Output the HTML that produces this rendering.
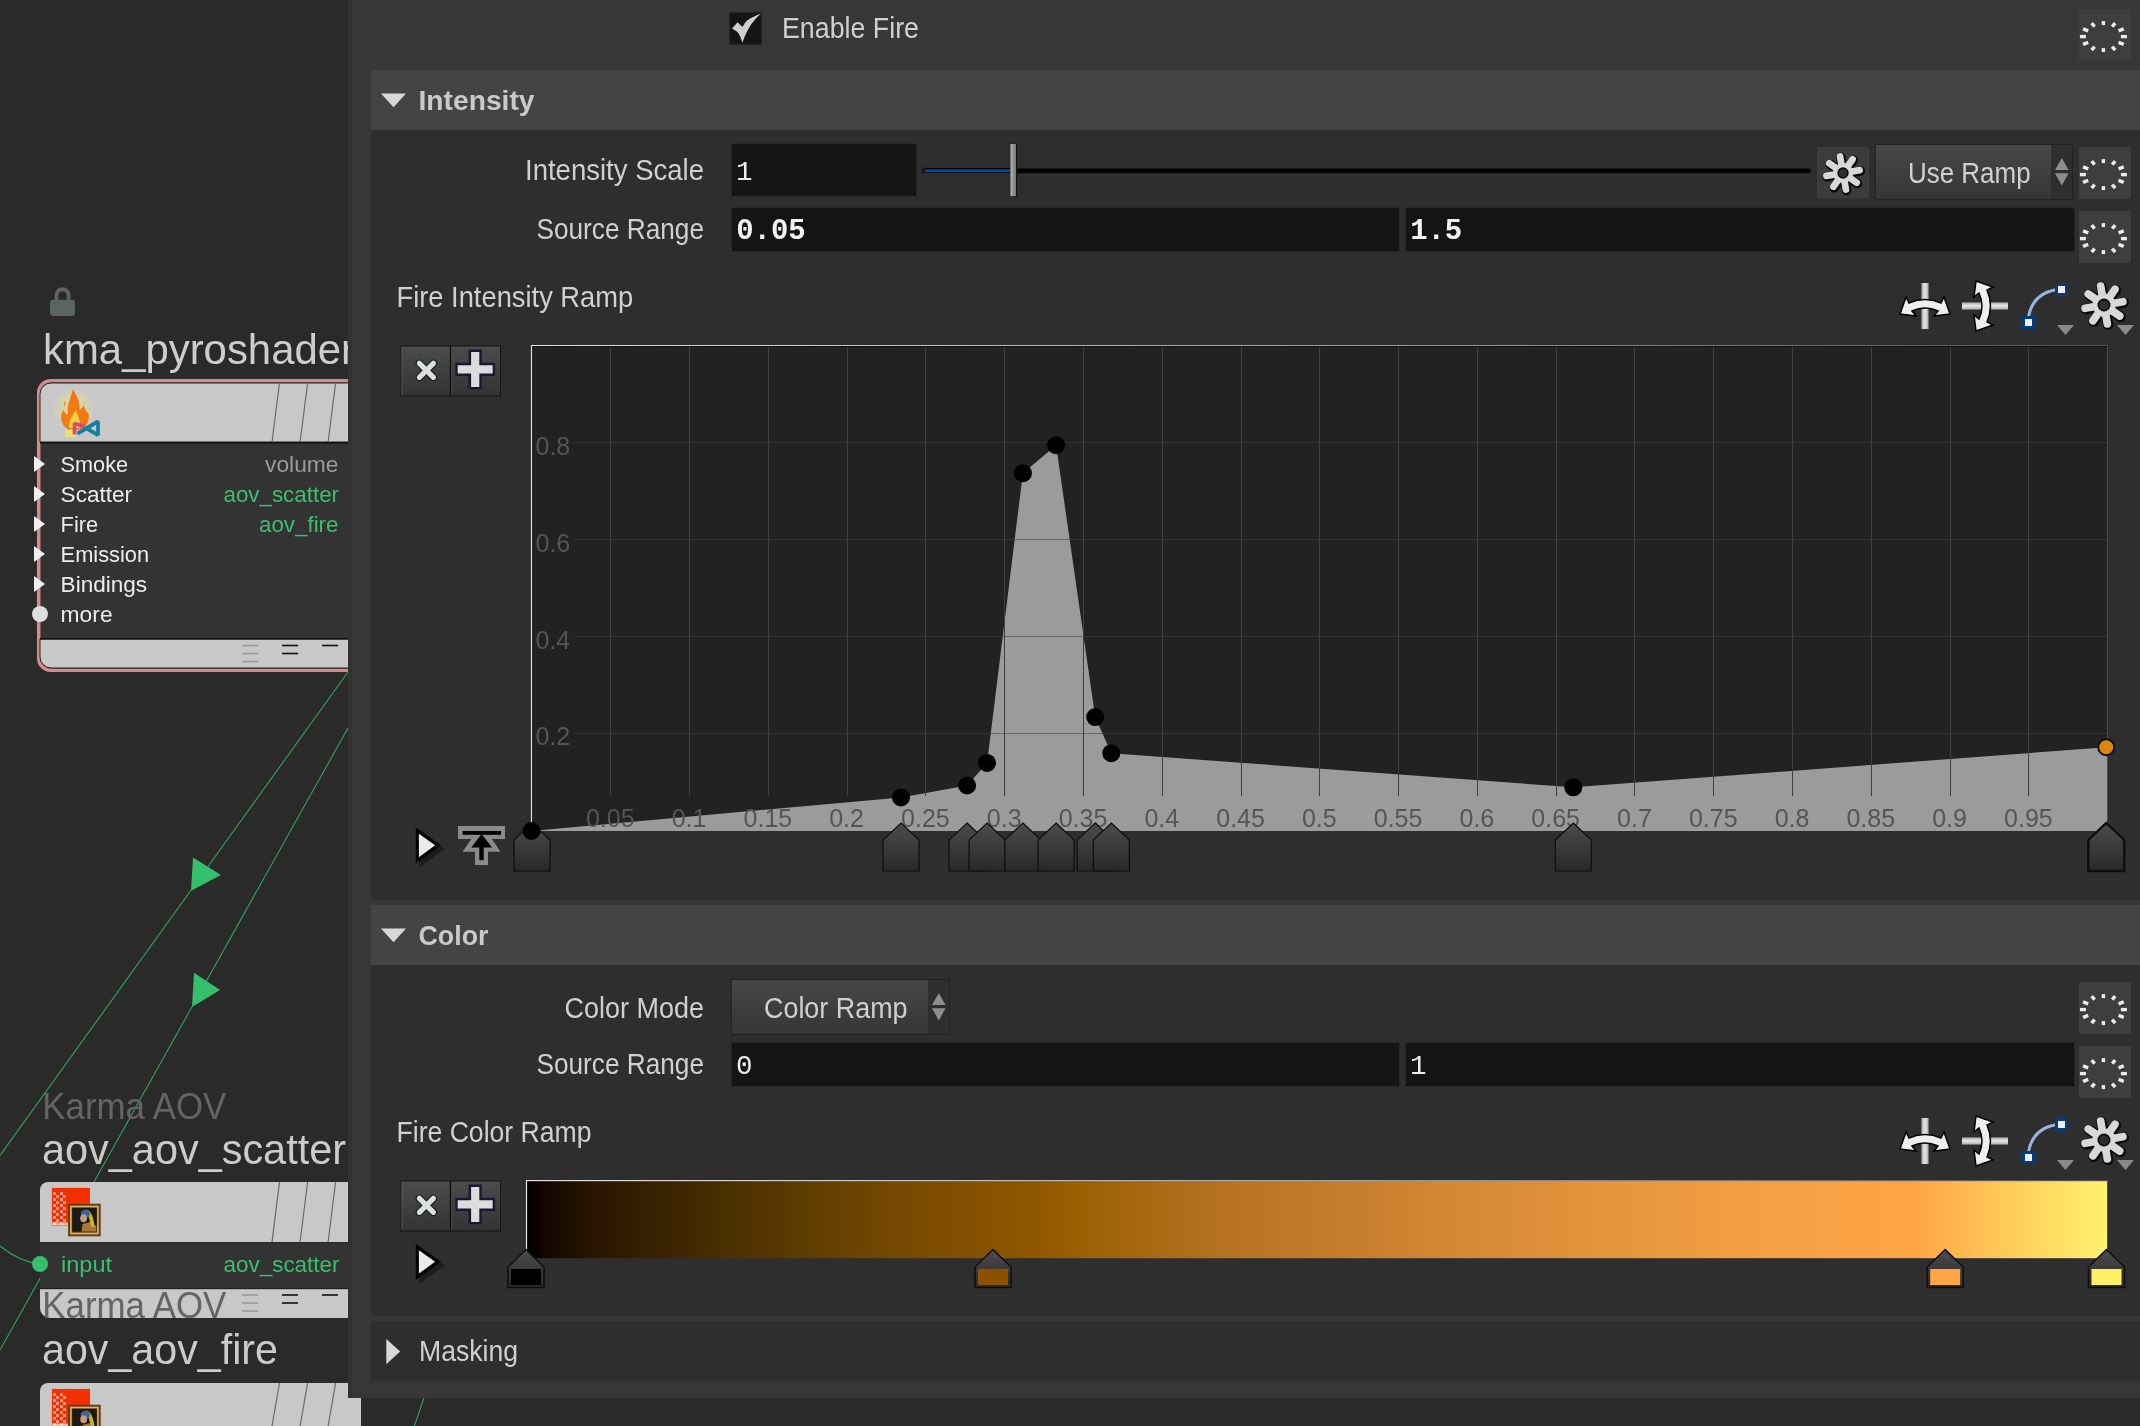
<!DOCTYPE html>
<html><head><meta charset="utf-8"><style>
html,body{margin:0;padding:0;background:#2a2a2a;overflow:hidden;}
svg{display:block;will-change:transform;}
</style></head><body>
<svg width="2140" height="1426" viewBox="0 0 2140 1426">
<defs><filter id="gshadow" x="-30%" y="-30%" width="160%" height="160%"><feDropShadow dx="1" dy="1.5" stdDeviation="1" flood-color="#000" flood-opacity="0.9"/></filter></defs>
<rect x="0" y="0" width="2140" height="1426" fill="#2a2a2a" />
<g stroke="#2eaa5e" stroke-width="1.05" fill="none">
<line x1="348" y1="672" x2="0" y2="1155.5"/>
<line x1="348" y1="728" x2="0" y2="1350"/>
<path d="M0,1246 Q20,1262 40,1264"/>
<line x1="426" y1="1392" x2="413" y2="1430"/>
</g>
<polygon points="193,857.6 221,875 191,890.7" fill="#33bf6b"/>
<polygon points="194,972.7 220,990 192,1007" fill="#33bf6b"/>
<g fill="#5a6560">
<path d="M54.6,301 V295.2 A8,8 0 0 1 70.6,295.2 V301 H66.6 V295.5 A4.1,4.1 0 0 0 58.4,295.5 V301 Z"/>
<rect x="50.1" y="299.8" width="24.8" height="16.1" rx="3"/>
</g>
<text x="43" y="364" font-family="Liberation Sans" font-size="43" fill="#cdcdcd" font-weight="normal" text-anchor="start" textLength="312" lengthAdjust="spacingAndGlyphs" >kma_pyroshader</text>
<rect x="38.7" y="380.8" width="330" height="289.4" rx="12" fill="#333333" stroke="#d28b8f" stroke-width="3.5"/>
<path d="M40,442 V394 A11,11 0 0 1 51,383 H360 V442 Z" fill="#c8c8c8" stroke="#222" stroke-width="1"/>
<rect x="40" y="442" width="320" height="1.5" fill="#111" />
<path d="M40,639 V657 A11,11 0 0 0 51,668 H360 V639 Z" fill="#c8c8c8" stroke="#222" stroke-width="1"/>
<rect x="40" y="638" width="320" height="1.5" fill="#111" />
<g stroke="#6a6a6a" stroke-width="1.2">
<line x1="279.5" y1="383" x2="272.0" y2="442"/>
<line x1="307.6" y1="383" x2="300.1" y2="442"/>
<line x1="335.6" y1="383" x2="328.1" y2="442"/>
</g>
<defs><radialGradient id="glow" cx="0.5" cy="0.5" r="0.5"><stop offset="0" stop-color="#f0e080" stop-opacity="0.75"/><stop offset="0.8" stop-color="#e0d8a0" stop-opacity="0.45"/><stop offset="1" stop-color="#d8d8c0" stop-opacity="0.2"/></radialGradient></defs>
<circle cx="73.6" cy="409.9" r="20.6" fill="url(#glow)"/>
<path d="M64,426 C60,420 60.5,414 63.5,410 C64.5,413 66.5,414.5 68,414.5 C66.5,406 70,400 73,389 C76.5,396 80.5,401 79.5,410 C81.5,408.5 83,407 84,405 C85,409 85.5,411 88.5,413.5 C90,420 87,426 82,429 L70,431 Z" fill="#f27a14"/>
<path d="M65.2,400.7 C63.5,403 63.8,405 64.6,406.5 C65.4,404.5 66,402.5 65.2,400.7 Z" fill="#f28a20"/>
<path d="M69,428 C68,422 72,417 75.7,409.5 C77.5,416 81,420 80,428 Z" fill="#f0d040"/>
<polygon points="64.5,431 72,429 76,437 65.5,437" fill="#ece070"/>
<path d="M74.5,434.5 L74.5,423.5 L84.5,426.5" fill="none" stroke="#d84880" stroke-width="3.6" stroke-linejoin="bevel"/>
<path d="M77.5,433.5 L98,421.5 L98,435 L86,428" fill="none" stroke="#15809e" stroke-width="3.8" stroke-linejoin="bevel"/>
<g stroke-width="1.6">
<line x1="242" y1="645.5" x2="258" y2="645.5" stroke="#9a9a9a"/>
<line x1="242" y1="653.5" x2="258" y2="653.5" stroke="#9a9a9a"/>
<line x1="242" y1="661.5" x2="258" y2="661.5" stroke="#9a9a9a"/>
<line x1="282" y1="645.5" x2="298" y2="645.5" stroke="#111"/>
<line x1="282" y1="653.5" x2="298" y2="653.5" stroke="#111"/>
<line x1="322" y1="645.5" x2="338" y2="645.5" stroke="#111"/>
</g>
<polygon points="34,456 45,464 34,472" fill="#f0f0f0"/>
<text x="60.6" y="471.6" font-family="Liberation Sans" font-size="22" fill="#ececec" font-weight="normal" text-anchor="start" textLength="67.5" lengthAdjust="spacingAndGlyphs" >Smoke</text>
<polygon points="34,486 45,494 34,502" fill="#f0f0f0"/>
<text x="60.6" y="501.6" font-family="Liberation Sans" font-size="22" fill="#ececec" font-weight="normal" text-anchor="start" textLength="71.5" lengthAdjust="spacingAndGlyphs" >Scatter</text>
<polygon points="34,516 45,524 34,532" fill="#f0f0f0"/>
<text x="60.6" y="531.6" font-family="Liberation Sans" font-size="22" fill="#ececec" font-weight="normal" text-anchor="start" textLength="37.5" lengthAdjust="spacingAndGlyphs" >Fire</text>
<polygon points="34,546 45,554 34,562" fill="#f0f0f0"/>
<text x="60.6" y="561.6" font-family="Liberation Sans" font-size="22" fill="#ececec" font-weight="normal" text-anchor="start" textLength="88.5" lengthAdjust="spacingAndGlyphs" >Emission</text>
<polygon points="34,576 45,584 34,592" fill="#f0f0f0"/>
<text x="60.6" y="591.6" font-family="Liberation Sans" font-size="22" fill="#ececec" font-weight="normal" text-anchor="start" textLength="86.5" lengthAdjust="spacingAndGlyphs" >Bindings</text>
<circle cx="40" cy="614" r="8" fill="#dedede"/>
<text x="60.6" y="621.6" font-family="Liberation Sans" font-size="22" fill="#ececec" font-weight="normal" text-anchor="start" textLength="52" lengthAdjust="spacingAndGlyphs" >more</text>
<text x="338.5" y="471.6" font-family="Liberation Sans" font-size="22" fill="#9a9a9a" font-weight="normal" text-anchor="end" textLength="73.5" lengthAdjust="spacingAndGlyphs" >volume</text>
<text x="339" y="501.7" font-family="Liberation Sans" font-size="22" fill="#3cbf6e" font-weight="normal" text-anchor="end" textLength="115.5" lengthAdjust="spacingAndGlyphs" >aov_scatter</text>
<text x="338.5" y="531.7" font-family="Liberation Sans" font-size="22" fill="#3cbf6e" font-weight="normal" text-anchor="end" textLength="79.5" lengthAdjust="spacingAndGlyphs" >aov_fire</text>
<text x="42.3" y="1118.6" font-family="Liberation Sans" font-size="36" fill="#646464" font-weight="normal" text-anchor="start" textLength="184" lengthAdjust="spacingAndGlyphs" >Karma AOV</text>
<text x="42" y="1164" font-family="Liberation Sans" font-size="43" fill="#cbcbcb" font-weight="normal" text-anchor="start" textLength="304" lengthAdjust="spacingAndGlyphs" >aov_aov_scatter</text>
<path d="M40,1243 V1190 A8,8 0 0 1 48,1182 H360 V1243 Z" fill="#c8c8c8"/>
<rect x="40" y="1242" width="320" height="1.5" fill="#222" />
<rect x="40" y="1242.5" width="320" height="46" fill="#333333" />
<path d="M40,1289 V1308 A10,10 0 0 0 50,1318 H360 V1289 Z" fill="#c8c8c8"/>
<rect x="40" y="1288" width="320" height="1.2" fill="#222" />
<g stroke="#6a6a6a" stroke-width="1.2">
<line x1="279.5" y1="1182" x2="272.0" y2="1242"/>
<line x1="307.6" y1="1182" x2="300.1" y2="1242"/>
<line x1="335.6" y1="1182" x2="328.1" y2="1242"/>
</g>
<rect x="51.9" y="1187.9" width="38.1" height="37.9" fill="#f53000" />
<rect x="53" y="1192" width="3" height="3" fill="#f8a898" opacity="0.85"/>
<rect x="56" y="1195" width="3" height="3" fill="#f8a898" opacity="0.85"/>
<rect x="60" y="1192" width="3" height="3" fill="#f8a898" opacity="0.85"/>
<rect x="63" y="1195" width="3" height="3" fill="#f8a898" opacity="0.85"/>
<rect x="53" y="1198" width="3" height="3" fill="#f8a898" opacity="0.85"/>
<rect x="60" y="1198" width="3" height="3" fill="#f8a898" opacity="0.85"/>
<rect x="56" y="1201" width="3" height="3" fill="#f8a898" opacity="0.85"/>
<rect x="63" y="1201" width="3" height="3" fill="#f8a898" opacity="0.85"/>
<rect x="53" y="1204" width="3" height="3" fill="#f8a898" opacity="0.85"/>
<rect x="60" y="1204" width="3" height="3" fill="#f8a898" opacity="0.85"/>
<rect x="56" y="1207" width="3" height="3" fill="#f8a898" opacity="0.85"/>
<rect x="63" y="1207" width="3" height="3" fill="#f8a898" opacity="0.85"/>
<rect x="53" y="1210" width="3" height="3" fill="#f8a898" opacity="0.85"/>
<rect x="60" y="1210" width="3" height="3" fill="#f8a898" opacity="0.85"/>
<rect x="56" y="1213" width="3" height="3" fill="#f8a898" opacity="0.85"/>
<rect x="63" y="1213" width="3" height="3" fill="#f8a898" opacity="0.85"/>
<rect x="53" y="1216" width="3" height="3" fill="#f8a898" opacity="0.85"/>
<rect x="60" y="1216" width="3" height="3" fill="#f8a898" opacity="0.85"/>
<rect x="56" y="1219" width="3" height="3" fill="#f8a898" opacity="0.85"/>
<rect x="63" y="1219" width="3" height="3" fill="#f8a898" opacity="0.85"/>
<rect x="53" y="1222" width="3" height="3" fill="#f8a898" opacity="0.85"/>
<rect x="60" y="1222" width="3" height="3" fill="#f8a898" opacity="0.85"/>
<rect x="52.2" y="1222.5" width="16" height="3" fill="#f0f0e0" opacity="0.7"/>
<rect x="68.1" y="1203.7" width="32.6" height="32.6" fill="#6a3a18"/>
<rect x="70.9" y="1206.5" width="27" height="27" fill="none" stroke="#d8b860" stroke-width="1.6"/>
<rect x="72.3" y="1208" width="24.4" height="23.6" fill="#1c1a16"/>
<path d="M81.6,1231.6 L82.5,1224 L90,1222 L96.3,1226 L96.3,1231.6 Z" fill="#a87838"/>
<path d="M86.2,1209.5 C91,1210 94,1218 94.6,1227 L91,1227 C90,1220 88,1214 86.2,1212 Z" fill="#c8b030"/>
<ellipse cx="85.3" cy="1213.8" rx="4.6" ry="4" fill="#3a64a0"/>
<ellipse cx="83.6" cy="1218.3" rx="3.4" ry="4" fill="#c89880"/>
<g stroke-width="1.6">
<line x1="242" y1="1295" x2="258" y2="1295" stroke="#9a9a9a"/>
<line x1="242" y1="1303" x2="258" y2="1303" stroke="#9a9a9a"/>
<line x1="242" y1="1311" x2="258" y2="1311" stroke="#9a9a9a"/>
<line x1="282" y1="1295" x2="298" y2="1295" stroke="#111"/>
<line x1="282" y1="1303" x2="298" y2="1303" stroke="#111"/>
<line x1="322" y1="1295" x2="338" y2="1295" stroke="#111"/>
</g>
<circle cx="40" cy="1264" r="8" fill="#33bf6b"/>
<text x="61" y="1271.5" font-family="Liberation Sans" font-size="22" fill="#3cbf6e" font-weight="normal" text-anchor="start" textLength="51" lengthAdjust="spacingAndGlyphs" >input</text>
<text x="339.5" y="1271.5" font-family="Liberation Sans" font-size="22" fill="#3cbf6e" font-weight="normal" text-anchor="end" textLength="116" lengthAdjust="spacingAndGlyphs" >aov_scatter</text>
<text x="42.3" y="1318.3" font-family="Liberation Sans" font-size="36" fill="#646464" font-weight="normal" text-anchor="start" textLength="184" lengthAdjust="spacingAndGlyphs" >Karma AOV</text>
<text x="42" y="1363.7" font-family="Liberation Sans" font-size="43" fill="#cbcbcb" font-weight="normal" text-anchor="start" textLength="236" lengthAdjust="spacingAndGlyphs" >aov_aov_fire</text>
<path d="M40,1426 V1391 A8,8 0 0 1 48,1383 H361 V1426 Z" fill="#c8c8c8"/>
<g stroke="#6a6a6a" stroke-width="1.2">
<line x1="279.5" y1="1383" x2="272.0" y2="1426"/>
<line x1="307.6" y1="1383" x2="300.1" y2="1426"/>
<line x1="335.6" y1="1383" x2="328.1" y2="1426"/>
</g>
<rect x="51.9" y="1388.9" width="38.1" height="37.9" fill="#f53000" />
<rect x="53" y="1393" width="3" height="3" fill="#f8a898" opacity="0.85"/>
<rect x="56" y="1396" width="3" height="3" fill="#f8a898" opacity="0.85"/>
<rect x="60" y="1393" width="3" height="3" fill="#f8a898" opacity="0.85"/>
<rect x="63" y="1396" width="3" height="3" fill="#f8a898" opacity="0.85"/>
<rect x="53" y="1399" width="3" height="3" fill="#f8a898" opacity="0.85"/>
<rect x="60" y="1399" width="3" height="3" fill="#f8a898" opacity="0.85"/>
<rect x="56" y="1402" width="3" height="3" fill="#f8a898" opacity="0.85"/>
<rect x="63" y="1402" width="3" height="3" fill="#f8a898" opacity="0.85"/>
<rect x="53" y="1405" width="3" height="3" fill="#f8a898" opacity="0.85"/>
<rect x="60" y="1405" width="3" height="3" fill="#f8a898" opacity="0.85"/>
<rect x="56" y="1408" width="3" height="3" fill="#f8a898" opacity="0.85"/>
<rect x="63" y="1408" width="3" height="3" fill="#f8a898" opacity="0.85"/>
<rect x="53" y="1411" width="3" height="3" fill="#f8a898" opacity="0.85"/>
<rect x="60" y="1411" width="3" height="3" fill="#f8a898" opacity="0.85"/>
<rect x="56" y="1414" width="3" height="3" fill="#f8a898" opacity="0.85"/>
<rect x="63" y="1414" width="3" height="3" fill="#f8a898" opacity="0.85"/>
<rect x="53" y="1417" width="3" height="3" fill="#f8a898" opacity="0.85"/>
<rect x="60" y="1417" width="3" height="3" fill="#f8a898" opacity="0.85"/>
<rect x="56" y="1420" width="3" height="3" fill="#f8a898" opacity="0.85"/>
<rect x="63" y="1420" width="3" height="3" fill="#f8a898" opacity="0.85"/>
<rect x="53" y="1423" width="3" height="3" fill="#f8a898" opacity="0.85"/>
<rect x="60" y="1423" width="3" height="3" fill="#f8a898" opacity="0.85"/>
<rect x="52.2" y="1423.5" width="16" height="3" fill="#f0f0e0" opacity="0.7"/>
<rect x="68.1" y="1404.7" width="32.6" height="32.6" fill="#6a3a18"/>
<rect x="70.9" y="1407.5" width="27" height="27" fill="none" stroke="#d8b860" stroke-width="1.6"/>
<rect x="72.3" y="1409" width="24.4" height="23.6" fill="#1c1a16"/>
<path d="M81.6,1432.6 L82.5,1425 L90,1423 L96.3,1427 L96.3,1432.6 Z" fill="#a87838"/>
<path d="M86.2,1410.5 C91,1411 94,1419 94.6,1428 L91,1428 C90,1421 88,1415 86.2,1413 Z" fill="#c8b030"/>
<ellipse cx="85.3" cy="1414.8" rx="4.6" ry="4" fill="#3a64a0"/>
<ellipse cx="83.6" cy="1419.3" rx="3.4" ry="4" fill="#c89880"/>
<rect x="348" y="0" width="1792" height="1398" fill="#373737" />
<rect x="348" y="0" width="4" height="1398" fill="#323232" />
<rect x="729.8" y="12.6" width="31.6" height="31.6" fill="#141414" stroke="#222" stroke-width="1.2"/>
<path d="M732,28.4 L737.6,22.2 L742.4,27.1 C744,24.5 745,22 746.9,20.7 C751,18 756,15.5 761.1,13.6 C756,18 751,24 748.4,28.9 C746,33 744,38 742.4,42.8 C741,38 739,33 736.8,31.5 Z" fill="#cfcfcf"/>
<text x="782" y="37.9" font-family="Liberation Sans" font-size="30" fill="#d0d0d0" font-weight="normal" text-anchor="start" textLength="137" lengthAdjust="spacingAndGlyphs" >Enable Fire</text>
<rect x="2079" y="9" width="52" height="52" fill="#3e3e3e" />
<g stroke="#ececec" stroke-width="3.4">
<line x1="2120.90" y1="36.60" x2="2126.90" y2="36.60"/>
<line x1="2118.56" y1="42.35" x2="2123.75" y2="44.35"/>
<line x1="2112.15" y1="46.56" x2="2115.15" y2="50.02"/>
<line x1="2103.40" y1="48.10" x2="2103.40" y2="52.10"/>
<line x1="2094.65" y1="46.56" x2="2091.65" y2="50.02"/>
<line x1="2088.24" y1="42.35" x2="2083.05" y2="44.35"/>
<line x1="2085.90" y1="36.60" x2="2079.90" y2="36.60"/>
<line x1="2088.24" y1="30.85" x2="2083.05" y2="28.85"/>
<line x1="2094.65" y1="26.64" x2="2091.65" y2="23.18"/>
<line x1="2103.40" y1="25.10" x2="2103.40" y2="21.10"/>
<line x1="2112.15" y1="26.64" x2="2115.15" y2="23.18"/>
<line x1="2118.56" y1="30.85" x2="2123.75" y2="28.85"/>
</g>
<rect x="371" y="70" width="1769" height="60" fill="#444444" />
<polygon points="381,93.4 406,93.4 393.5,107.2" fill="#d8d8d8"/>
<text x="418.5" y="110.1" font-family="Liberation Sans" font-size="28.5" fill="#cacaca" font-weight="bold" text-anchor="start" textLength="116" lengthAdjust="spacingAndGlyphs" >Intensity</text>
<rect x="371" y="130" width="1769" height="770" fill="#2e2e2e" />
<text x="704" y="180.4" font-family="Liberation Sans" font-size="29" fill="#d0d0d0" font-weight="normal" text-anchor="end" textLength="179" lengthAdjust="spacingAndGlyphs" >Intensity Scale</text>
<rect x="731.5" y="143.5" width="185" height="53" fill="#141414" stroke="#262626"/>
<text x="736" y="180.3" font-family="Liberation Mono" font-size="27.5" fill="#ececec" font-weight="normal" text-anchor="start" >1</text>
<rect x="922" y="167" width="1.3" height="7" fill="#0a0a0a"/>
<rect x="1016" y="168.4" width="795" height="4.8" rx="2.4" fill="#000"/>
<rect x="924" y="168" width="88" height="5.1" rx="1.5" fill="#000"/>
<rect x="925" y="169.2" width="85.5" height="3" fill="#0448a0"/>
<defs><linearGradient id="hdl" x1="0" y1="0" x2="1" y2="0"><stop offset="0" stop-color="#c4c4c4"/><stop offset="0.35" stop-color="#9a9a9a"/><stop offset="1" stop-color="#767676"/></linearGradient></defs>
<rect x="1010.2" y="143.8" width="7" height="53" fill="#0a0a0a"/>
<rect x="1010.5" y="144" width="5.6" height="52.2" fill="url(#hdl)"/>
<rect x="1817" y="147" width="52" height="51.5" fill="#3c3c3c" />
<g><circle cx="1843.8" cy="173.9" r="11.48" fill="#0a0a0a"/><line x1="1843.8" y1="173.9" x2="1860.34" y2="170.98" stroke="#0a0a0a" stroke-width="9.52" stroke-linecap="round"/><line x1="1843.8" y1="173.9" x2="1857.56" y2="183.54" stroke="#0a0a0a" stroke-width="9.52" stroke-linecap="round"/><line x1="1843.8" y1="173.9" x2="1846.72" y2="190.44" stroke="#0a0a0a" stroke-width="9.52" stroke-linecap="round"/><line x1="1843.8" y1="173.9" x2="1834.16" y2="187.66" stroke="#0a0a0a" stroke-width="9.52" stroke-linecap="round"/><line x1="1843.8" y1="173.9" x2="1827.26" y2="176.82" stroke="#0a0a0a" stroke-width="9.52" stroke-linecap="round"/><line x1="1843.8" y1="173.9" x2="1830.04" y2="164.26" stroke="#0a0a0a" stroke-width="9.52" stroke-linecap="round"/><line x1="1843.8" y1="173.9" x2="1840.88" y2="157.36" stroke="#0a0a0a" stroke-width="9.52" stroke-linecap="round"/><line x1="1843.8" y1="173.9" x2="1853.44" y2="160.14" stroke="#0a0a0a" stroke-width="9.52" stroke-linecap="round"/><circle cx="1843" cy="173" r="10.08" fill="#d8d8d8"/><line x1="1843" y1="173" x2="1859.54" y2="170.08" stroke="#d8d8d8" stroke-width="6.72" stroke-linecap="round"/><line x1="1843" y1="173" x2="1856.76" y2="182.64" stroke="#d8d8d8" stroke-width="6.72" stroke-linecap="round"/><line x1="1843" y1="173" x2="1845.92" y2="189.54" stroke="#d8d8d8" stroke-width="6.72" stroke-linecap="round"/><line x1="1843" y1="173" x2="1833.36" y2="186.76" stroke="#d8d8d8" stroke-width="6.72" stroke-linecap="round"/><line x1="1843" y1="173" x2="1826.46" y2="175.92" stroke="#d8d8d8" stroke-width="6.72" stroke-linecap="round"/><line x1="1843" y1="173" x2="1829.24" y2="163.36" stroke="#d8d8d8" stroke-width="6.72" stroke-linecap="round"/><line x1="1843" y1="173" x2="1840.08" y2="156.46" stroke="#d8d8d8" stroke-width="6.72" stroke-linecap="round"/><line x1="1843" y1="173" x2="1852.64" y2="159.24" stroke="#d8d8d8" stroke-width="6.72" stroke-linecap="round"/><circle cx="1843" cy="173" r="5.67" fill="#0a0a0a"/><circle cx="1843" cy="173" r="4.20" fill="#2e2e2e"/></g>
<defs><linearGradient id="dd1875" x1="0" y1="0" x2="0" y2="1"><stop offset="0" stop-color="#484848"/><stop offset="1" stop-color="#353535"/></linearGradient></defs>
<rect x="1875.5" y="144.5" width="197" height="55" fill="url(#dd1875)" stroke="#222"/>
<rect x="2051" y="145" width="21" height="54" fill="#2e2e2e"/>
<polygon points="2055.0,170.0 2068.6000000000004,170.0 2061.8,158.0" fill="#8e8e8e"/>
<polygon points="2055.0,173.3 2068.6000000000004,173.3 2061.8,185.5" fill="#8e8e8e"/>
<text x="1908" y="183.3" font-family="Liberation Sans" font-size="29" fill="#d0d0d0" font-weight="normal" text-anchor="start" textLength="122.6" lengthAdjust="spacingAndGlyphs" >Use Ramp</text>
<rect x="2079" y="147" width="52" height="52" fill="#3e3e3e" />
<g stroke="#ececec" stroke-width="3.4">
<line x1="2120.90" y1="174.60" x2="2126.90" y2="174.60"/>
<line x1="2118.56" y1="180.35" x2="2123.75" y2="182.35"/>
<line x1="2112.15" y1="184.56" x2="2115.15" y2="188.02"/>
<line x1="2103.40" y1="186.10" x2="2103.40" y2="190.10"/>
<line x1="2094.65" y1="184.56" x2="2091.65" y2="188.02"/>
<line x1="2088.24" y1="180.35" x2="2083.05" y2="182.35"/>
<line x1="2085.90" y1="174.60" x2="2079.90" y2="174.60"/>
<line x1="2088.24" y1="168.85" x2="2083.05" y2="166.85"/>
<line x1="2094.65" y1="164.64" x2="2091.65" y2="161.18"/>
<line x1="2103.40" y1="163.10" x2="2103.40" y2="159.10"/>
<line x1="2112.15" y1="164.64" x2="2115.15" y2="161.18"/>
<line x1="2118.56" y1="168.85" x2="2123.75" y2="166.85"/>
</g>
<text x="704" y="239.3" font-family="Liberation Sans" font-size="29" fill="#d0d0d0" font-weight="normal" text-anchor="end" textLength="167.5" lengthAdjust="spacingAndGlyphs" >Source Range</text>
<rect x="731.5" y="207.5" width="668" height="44" fill="#141414" stroke="#262626"/>
<rect x="1405.5" y="207.5" width="669" height="44" fill="#141414" stroke="#262626"/>
<text x="736.2" y="239.3" font-family="Liberation Mono" font-size="29.5" fill="#f2f2f2" font-weight="bold" text-anchor="start" textLength="69.5" lengthAdjust="spacingAndGlyphs" >0.05</text>
<text x="1410.2" y="239.3" font-family="Liberation Mono" font-size="29.5" fill="#f2f2f2" font-weight="bold" text-anchor="start" textLength="52" lengthAdjust="spacingAndGlyphs" >1.5</text>
<rect x="2079" y="211" width="52" height="52" fill="#3e3e3e" />
<g stroke="#ececec" stroke-width="3.4">
<line x1="2120.90" y1="238.60" x2="2126.90" y2="238.60"/>
<line x1="2118.56" y1="244.35" x2="2123.75" y2="246.35"/>
<line x1="2112.15" y1="248.56" x2="2115.15" y2="252.02"/>
<line x1="2103.40" y1="250.10" x2="2103.40" y2="254.10"/>
<line x1="2094.65" y1="248.56" x2="2091.65" y2="252.02"/>
<line x1="2088.24" y1="244.35" x2="2083.05" y2="246.35"/>
<line x1="2085.90" y1="238.60" x2="2079.90" y2="238.60"/>
<line x1="2088.24" y1="232.85" x2="2083.05" y2="230.85"/>
<line x1="2094.65" y1="228.64" x2="2091.65" y2="225.18"/>
<line x1="2103.40" y1="227.10" x2="2103.40" y2="223.10"/>
<line x1="2112.15" y1="228.64" x2="2115.15" y2="225.18"/>
<line x1="2118.56" y1="232.85" x2="2123.75" y2="230.85"/>
</g>
<text x="396.5" y="307.4" font-family="Liberation Sans" font-size="29" fill="#d0d0d0" font-weight="normal" text-anchor="start" textLength="236.7" lengthAdjust="spacingAndGlyphs" >Fire Intensity Ramp</text>
<g transform="translate(0,0)">
<rect x="1921.5" y="283" width="7" height="46" fill="#bdbdbd"/>
<rect x="1923.5" y="283" width="3" height="46" fill="#e0e0e0"/>
<path d="M1900,314 L1906,297 L1909,303 Q1925,296 1941,303 L1944,297 L1950,314 L1934,316 L1938,311 Q1925,305 1912,311 L1916,316 Z" fill="#eeeeee" stroke="#000" stroke-width="1.5" stroke-linejoin="miter"/>
<rect x="1962" y="302.5" width="46" height="7" fill="#bdbdbd"/>
<rect x="1962" y="304.5" width="46" height="3" fill="#e0e0e0"/>
<path d="M1976,281 L1993,287 L1987,290 Q1994,306 1987,322 L1993,325 L1976,331 L1974,315 L1979,319 Q1985,306 1979,293 L1974,297 Z" fill="#eeeeee" stroke="#000" stroke-width="1.5"/>
<path d="M2028,322 Q2030,292 2061,289" stroke="#9ab4e0" stroke-width="3" fill="none"/>
<rect x="2022" y="316" width="13" height="13" fill="#063a7a"/>
<rect x="2025" y="319" width="7" height="7" fill="#eeeeee"/>
<rect x="2055" y="283" width="13" height="13" fill="#063a7a"/>
<rect x="2058" y="286" width="7" height="7" fill="#eeeeee"/>
<polygon points="2057,325 2074,325 2065.5,335" fill="#8a8a8a"/>
</g>
<g><circle cx="2104.8" cy="305.9" r="12.92" fill="#0a0a0a"/><line x1="2104.8" y1="305.9" x2="2123.71" y2="302.57" stroke="#0a0a0a" stroke-width="10.48" stroke-linecap="round"/><line x1="2104.8" y1="305.9" x2="2120.53" y2="316.91" stroke="#0a0a0a" stroke-width="10.48" stroke-linecap="round"/><line x1="2104.8" y1="305.9" x2="2108.13" y2="324.81" stroke="#0a0a0a" stroke-width="10.48" stroke-linecap="round"/><line x1="2104.8" y1="305.9" x2="2093.79" y2="321.63" stroke="#0a0a0a" stroke-width="10.48" stroke-linecap="round"/><line x1="2104.8" y1="305.9" x2="2085.89" y2="309.23" stroke="#0a0a0a" stroke-width="10.48" stroke-linecap="round"/><line x1="2104.8" y1="305.9" x2="2089.07" y2="294.89" stroke="#0a0a0a" stroke-width="10.48" stroke-linecap="round"/><line x1="2104.8" y1="305.9" x2="2101.47" y2="286.99" stroke="#0a0a0a" stroke-width="10.48" stroke-linecap="round"/><line x1="2104.8" y1="305.9" x2="2115.81" y2="290.17" stroke="#0a0a0a" stroke-width="10.48" stroke-linecap="round"/><circle cx="2104" cy="305" r="11.52" fill="#d8d8d8"/><line x1="2104" y1="305" x2="2122.91" y2="301.67" stroke="#d8d8d8" stroke-width="7.68" stroke-linecap="round"/><line x1="2104" y1="305" x2="2119.73" y2="316.01" stroke="#d8d8d8" stroke-width="7.68" stroke-linecap="round"/><line x1="2104" y1="305" x2="2107.33" y2="323.91" stroke="#d8d8d8" stroke-width="7.68" stroke-linecap="round"/><line x1="2104" y1="305" x2="2092.99" y2="320.73" stroke="#d8d8d8" stroke-width="7.68" stroke-linecap="round"/><line x1="2104" y1="305" x2="2085.09" y2="308.33" stroke="#d8d8d8" stroke-width="7.68" stroke-linecap="round"/><line x1="2104" y1="305" x2="2088.27" y2="293.99" stroke="#d8d8d8" stroke-width="7.68" stroke-linecap="round"/><line x1="2104" y1="305" x2="2100.67" y2="286.09" stroke="#d8d8d8" stroke-width="7.68" stroke-linecap="round"/><line x1="2104" y1="305" x2="2115.01" y2="289.27" stroke="#d8d8d8" stroke-width="7.68" stroke-linecap="round"/><circle cx="2104" cy="305" r="6.48" fill="#0a0a0a"/><circle cx="2104" cy="305" r="4.80" fill="#2e2e2e"/></g>
<polygon points="2117,325 2134,325 2125.5,335" fill="#8a8a8a"/>
<defs><linearGradient id="bt346" x1="0" y1="0" x2="0" y2="1"><stop offset="0" stop-color="#4c4c4c"/><stop offset="1" stop-color="#333"/></linearGradient></defs>
<rect x="401" y="346" width="99.5" height="50" fill="url(#bt346)" stroke="#151515" stroke-width="1"/>
<line x1="402" y1="347" x2="402" y2="395" stroke="#555" stroke-width="1"/>
<line x1="451.5" y1="347" x2="451.5" y2="395" stroke="#505050" stroke-width="1"/>
<line x1="450.5" y1="346" x2="450.5" y2="396" stroke="#0a0a0a" stroke-width="1.3"/>
<g stroke="#10201c" stroke-width="7.4" stroke-linecap="round"><line x1="419.4" y1="363.3" x2="433.4" y2="377.3"/><line x1="433.4" y1="363.3" x2="419.4" y2="377.3"/></g>
<g stroke="#dedede" stroke-width="5.2" stroke-linecap="round"><line x1="419.4" y1="363.3" x2="433.4" y2="377.3"/><line x1="433.4" y1="363.3" x2="419.4" y2="377.3"/></g>
<path d="M468.59999999999997,349.5 H481.8 V362.79999999999995 H495.09999999999997 V376.0 H481.8 V389.29999999999995 H468.59999999999997 V376.0 H455.3 V362.79999999999995 H468.59999999999997 Z" fill="#1a1830"/>
<path d="M471.09999999999997,351.9 H479.3 V365.29999999999995 H492.7 V373.5 H479.3 V386.9 H471.09999999999997 V373.5 H457.7 V365.29999999999995 H471.09999999999997 Z" fill="#dcdcdc"/>
<rect x="531" y="345" width="1576.5" height="486" fill="#222222"/>
<polygon points="531.5,831 901,797.4 967.1,785.5 987.1,762.9 1022.9,473.2 1056.1,445.2 1095.2,717.1 1111.3,753.2 1573.3,787.3 2106.2,747.2 2107.2,747.2 2107.2,831 531.5,831" fill="#9b9b9b"/>
<g stroke="#404040" stroke-width="1">
<line x1="610.5" y1="346" x2="610.5" y2="796"/>
<line x1="689.5" y1="346" x2="689.5" y2="796"/>
<line x1="768.5" y1="346" x2="768.5" y2="796"/>
<line x1="847.5" y1="346" x2="847.5" y2="796"/>
<line x1="925.5" y1="346" x2="925.5" y2="796"/>
<line x1="1004.5" y1="346" x2="1004.5" y2="796"/>
<line x1="1083.5" y1="346" x2="1083.5" y2="796"/>
<line x1="1162.5" y1="346" x2="1162.5" y2="796"/>
<line x1="1241.5" y1="346" x2="1241.5" y2="796"/>
<line x1="1319.5" y1="346" x2="1319.5" y2="796"/>
<line x1="1398.5" y1="346" x2="1398.5" y2="796"/>
<line x1="1477.5" y1="346" x2="1477.5" y2="796"/>
<line x1="1556.5" y1="346" x2="1556.5" y2="796"/>
<line x1="1634.5" y1="346" x2="1634.5" y2="796"/>
<line x1="1713.5" y1="346" x2="1713.5" y2="796"/>
<line x1="1792.5" y1="346" x2="1792.5" y2="796"/>
<line x1="1871.5" y1="346" x2="1871.5" y2="796"/>
<line x1="1950.5" y1="346" x2="1950.5" y2="796"/>
<line x1="2028.5" y1="346" x2="2028.5" y2="796"/>
</g>
<g stroke="rgb(66,66,66)" stroke-opacity="0.554" stroke-width="1">
<line x1="574" y1="733.5" x2="2107" y2="733.5"/>
<line x1="574" y1="636.5" x2="2107" y2="636.5"/>
<line x1="574" y1="539.5" x2="2107" y2="539.5"/>
<line x1="574" y1="442.5" x2="2107" y2="442.5"/>
</g>
<text x="535.5" y="745.2" font-family="Liberation Sans" font-size="25" fill="#555555" font-weight="normal" text-anchor="start" >0.2</text>
<text x="535.5" y="648.8" font-family="Liberation Sans" font-size="25" fill="#555555" font-weight="normal" text-anchor="start" >0.4</text>
<text x="535.5" y="551.7" font-family="Liberation Sans" font-size="25" fill="#555555" font-weight="normal" text-anchor="start" >0.6</text>
<text x="535.5" y="454.9" font-family="Liberation Sans" font-size="25" fill="#555555" font-weight="normal" text-anchor="start" >0.8</text>
<text x="610.3" y="827" font-family="Liberation Sans" font-size="25" fill="#555555" font-weight="normal" text-anchor="middle" >0.05</text>
<text x="689.1" y="827" font-family="Liberation Sans" font-size="25" fill="#555555" font-weight="normal" text-anchor="middle" >0.1</text>
<text x="767.9" y="827" font-family="Liberation Sans" font-size="25" fill="#555555" font-weight="normal" text-anchor="middle" >0.15</text>
<text x="846.6" y="827" font-family="Liberation Sans" font-size="25" fill="#555555" font-weight="normal" text-anchor="middle" >0.2</text>
<text x="925.4" y="827" font-family="Liberation Sans" font-size="25" fill="#555555" font-weight="normal" text-anchor="middle" >0.25</text>
<text x="1004.2" y="827" font-family="Liberation Sans" font-size="25" fill="#555555" font-weight="normal" text-anchor="middle" >0.3</text>
<text x="1083.0" y="827" font-family="Liberation Sans" font-size="25" fill="#555555" font-weight="normal" text-anchor="middle" >0.35</text>
<text x="1161.8" y="827" font-family="Liberation Sans" font-size="25" fill="#555555" font-weight="normal" text-anchor="middle" >0.4</text>
<text x="1240.6" y="827" font-family="Liberation Sans" font-size="25" fill="#555555" font-weight="normal" text-anchor="middle" >0.45</text>
<text x="1319.3" y="827" font-family="Liberation Sans" font-size="25" fill="#555555" font-weight="normal" text-anchor="middle" >0.5</text>
<text x="1398.1" y="827" font-family="Liberation Sans" font-size="25" fill="#555555" font-weight="normal" text-anchor="middle" >0.55</text>
<text x="1476.9" y="827" font-family="Liberation Sans" font-size="25" fill="#555555" font-weight="normal" text-anchor="middle" >0.6</text>
<text x="1555.7" y="827" font-family="Liberation Sans" font-size="25" fill="#555555" font-weight="normal" text-anchor="middle" >0.65</text>
<text x="1634.5" y="827" font-family="Liberation Sans" font-size="25" fill="#555555" font-weight="normal" text-anchor="middle" >0.7</text>
<text x="1713.3" y="827" font-family="Liberation Sans" font-size="25" fill="#555555" font-weight="normal" text-anchor="middle" >0.75</text>
<text x="1792.1" y="827" font-family="Liberation Sans" font-size="25" fill="#555555" font-weight="normal" text-anchor="middle" >0.8</text>
<text x="1870.8" y="827" font-family="Liberation Sans" font-size="25" fill="#555555" font-weight="normal" text-anchor="middle" >0.85</text>
<text x="1949.6" y="827" font-family="Liberation Sans" font-size="25" fill="#555555" font-weight="normal" text-anchor="middle" >0.9</text>
<text x="2028.4" y="827" font-family="Liberation Sans" font-size="25" fill="#555555" font-weight="normal" text-anchor="middle" >0.95</text>
<line x1="532" y1="346.5" x2="2107" y2="346.5" stroke="#111" stroke-width="1"/>
<line x1="532.5" y1="346" x2="532.5" y2="823" stroke="#161616" stroke-width="1"/>
<defs><linearGradient id="topb" gradientUnits="userSpaceOnUse" x1="531" y1="0" x2="2108" y2="0"><stop offset="0" stop-color="#e2e2e2"/><stop offset="0.5" stop-color="#a2a2a2"/><stop offset="1" stop-color="#505050"/></linearGradient></defs>
<rect x="531" y="345" width="1577" height="1" fill="url(#topb)"/>
<rect x="2107" y="345" width="1" height="486" fill="#4a4a4a"/>
<line x1="531.5" y1="345" x2="531.5" y2="823" stroke="#e0e0e0" stroke-width="1.2"/>
<defs><linearGradient id="keyg" x1="0" y1="0" x2="0" y2="1"><stop offset="0" stop-color="#4c4c4c"/><stop offset="1" stop-color="#282828"/></linearGradient></defs>
<path d="M532,823 L550.0,840 V871 H514.0 V840 Z" fill="url(#keyg)" stroke="#0e0e0e" stroke-width="1.2"/>
<path d="M901,823 L919.0,840 V871 H883.0 V840 Z" fill="url(#keyg)" stroke="#0e0e0e" stroke-width="1.2"/>
<path d="M967.1,823 L985.1,840 V871 H949.1 V840 Z" fill="url(#keyg)" stroke="#0e0e0e" stroke-width="1.2"/>
<path d="M987.1,823 L1005.1,840 V871 H969.1 V840 Z" fill="url(#keyg)" stroke="#0e0e0e" stroke-width="1.2"/>
<path d="M1022.9,823 L1040.9,840 V871 H1004.9 V840 Z" fill="url(#keyg)" stroke="#0e0e0e" stroke-width="1.2"/>
<path d="M1056.1,823 L1074.1,840 V871 H1038.1 V840 Z" fill="url(#keyg)" stroke="#0e0e0e" stroke-width="1.2"/>
<path d="M1095.2,823 L1113.2,840 V871 H1077.2 V840 Z" fill="url(#keyg)" stroke="#0e0e0e" stroke-width="1.2"/>
<path d="M1111.3,823 L1129.3,840 V871 H1093.3 V840 Z" fill="url(#keyg)" stroke="#0e0e0e" stroke-width="1.2"/>
<path d="M1573.3,823 L1591.3,840 V871 H1555.3 V840 Z" fill="url(#keyg)" stroke="#0e0e0e" stroke-width="1.2"/>
<path d="M2106.3,823 L2124.3,840 V871 H2088.3 V840 Z" fill="url(#keyg)" stroke="#0e0e0e" stroke-width="2.4"/>
<circle cx="531.5" cy="831" r="9" fill="#000"/>
<circle cx="901" cy="797.4" r="9" fill="#000"/>
<circle cx="967.1" cy="785.5" r="9" fill="#000"/>
<circle cx="987.1" cy="762.9" r="9" fill="#000"/>
<circle cx="1022.9" cy="473.2" r="9" fill="#000"/>
<circle cx="1056.1" cy="445.2" r="9" fill="#000"/>
<circle cx="1095.2" cy="717.1" r="9" fill="#000"/>
<circle cx="1111.3" cy="753.2" r="9" fill="#000"/>
<circle cx="1573.3" cy="787.3" r="9" fill="#000"/>
<circle cx="2106.2" cy="747.2" r="8" fill="#d8860e" stroke="#111" stroke-width="2"/>
<polygon points="419.5,831.5 445.0,849.0 419.5,867.0" fill="#1c1c1c"/>
<polygon points="415.8,827.6 441.0,845.3 415.8,863.3" fill="#000"/>
<polygon points="418.9,833.8 435.1,845.3 418.9,857.2" fill="#ececec"/>
<polygon points="458,826 505,826 505,839 492,839 500.4,851.8 488,851.8 488,865 475,865 475,851.8 462.6,851.8 471.3,839 458,839" fill="#8a8a8a"/>
<rect x="462.6" y="831" width="38.4" height="3.8" fill="#000"/>
<polygon points="481.6,834 492,847.6 483.7,847.6 483.7,860.2 479.3,860.2 479.3,847.6 471.3,847.6" fill="#000"/>
<rect x="371" y="905" width="1769" height="60" fill="#444444" />
<polygon points="381,928.4 406,928.4 393.5,942.2" fill="#d8d8d8"/>
<text x="418.5" y="945.1" font-family="Liberation Sans" font-size="28.5" fill="#cacaca" font-weight="bold" text-anchor="start" textLength="70" lengthAdjust="spacingAndGlyphs" >Color</text>
<rect x="371" y="965" width="1769" height="351" fill="#2e2e2e" />
<text x="704" y="1018" font-family="Liberation Sans" font-size="29" fill="#d0d0d0" font-weight="normal" text-anchor="end" textLength="139.4" lengthAdjust="spacingAndGlyphs" >Color Mode</text>
<defs><linearGradient id="dd731" x1="0" y1="0" x2="0" y2="1"><stop offset="0" stop-color="#484848"/><stop offset="1" stop-color="#353535"/></linearGradient></defs>
<rect x="731.5" y="979.5" width="218" height="55" fill="url(#dd731)" stroke="#222"/>
<rect x="928" y="980" width="21" height="54" fill="#2e2e2e"/>
<polygon points="932.0,1005.0 945.5999999999999,1005.0 938.8,993.0" fill="#8e8e8e"/>
<polygon points="932.0,1008.3 945.5999999999999,1008.3 938.8,1020.5" fill="#8e8e8e"/>
<text x="764" y="1018" font-family="Liberation Sans" font-size="29" fill="#d0d0d0" font-weight="normal" text-anchor="start" textLength="143.5" lengthAdjust="spacingAndGlyphs" >Color Ramp</text>
<rect x="2079" y="982" width="52" height="52" fill="#3e3e3e" />
<g stroke="#ececec" stroke-width="3.4">
<line x1="2120.90" y1="1009.60" x2="2126.90" y2="1009.60"/>
<line x1="2118.56" y1="1015.35" x2="2123.75" y2="1017.35"/>
<line x1="2112.15" y1="1019.56" x2="2115.15" y2="1023.02"/>
<line x1="2103.40" y1="1021.10" x2="2103.40" y2="1025.10"/>
<line x1="2094.65" y1="1019.56" x2="2091.65" y2="1023.02"/>
<line x1="2088.24" y1="1015.35" x2="2083.05" y2="1017.35"/>
<line x1="2085.90" y1="1009.60" x2="2079.90" y2="1009.60"/>
<line x1="2088.24" y1="1003.85" x2="2083.05" y2="1001.85"/>
<line x1="2094.65" y1="999.64" x2="2091.65" y2="996.18"/>
<line x1="2103.40" y1="998.10" x2="2103.40" y2="994.10"/>
<line x1="2112.15" y1="999.64" x2="2115.15" y2="996.18"/>
<line x1="2118.56" y1="1003.85" x2="2123.75" y2="1001.85"/>
</g>
<text x="704" y="1074.3" font-family="Liberation Sans" font-size="29" fill="#d0d0d0" font-weight="normal" text-anchor="end" textLength="167.5" lengthAdjust="spacingAndGlyphs" >Source Range</text>
<rect x="731.5" y="1042.5" width="668" height="44" fill="#141414" stroke="#262626"/>
<rect x="1405.5" y="1042.5" width="669" height="44" fill="#141414" stroke="#262626"/>
<text x="736" y="1074.3" font-family="Liberation Mono" font-size="27.5" fill="#ececec" font-weight="normal" text-anchor="start" >0</text>
<text x="1410" y="1074.3" font-family="Liberation Mono" font-size="27.5" fill="#ececec" font-weight="normal" text-anchor="start" >1</text>
<rect x="2079" y="1046" width="52" height="52" fill="#3e3e3e" />
<g stroke="#ececec" stroke-width="3.4">
<line x1="2120.90" y1="1073.60" x2="2126.90" y2="1073.60"/>
<line x1="2118.56" y1="1079.35" x2="2123.75" y2="1081.35"/>
<line x1="2112.15" y1="1083.56" x2="2115.15" y2="1087.02"/>
<line x1="2103.40" y1="1085.10" x2="2103.40" y2="1089.10"/>
<line x1="2094.65" y1="1083.56" x2="2091.65" y2="1087.02"/>
<line x1="2088.24" y1="1079.35" x2="2083.05" y2="1081.35"/>
<line x1="2085.90" y1="1073.60" x2="2079.90" y2="1073.60"/>
<line x1="2088.24" y1="1067.85" x2="2083.05" y2="1065.85"/>
<line x1="2094.65" y1="1063.64" x2="2091.65" y2="1060.18"/>
<line x1="2103.40" y1="1062.10" x2="2103.40" y2="1058.10"/>
<line x1="2112.15" y1="1063.64" x2="2115.15" y2="1060.18"/>
<line x1="2118.56" y1="1067.85" x2="2123.75" y2="1065.85"/>
</g>
<text x="396.5" y="1142.2" font-family="Liberation Sans" font-size="29" fill="#d0d0d0" font-weight="normal" text-anchor="start" textLength="195" lengthAdjust="spacingAndGlyphs" >Fire Color Ramp</text>
<g transform="translate(0,835)">
<rect x="1921.5" y="283" width="7" height="46" fill="#bdbdbd"/>
<rect x="1923.5" y="283" width="3" height="46" fill="#e0e0e0"/>
<path d="M1900,314 L1906,297 L1909,303 Q1925,296 1941,303 L1944,297 L1950,314 L1934,316 L1938,311 Q1925,305 1912,311 L1916,316 Z" fill="#eeeeee" stroke="#000" stroke-width="1.5" stroke-linejoin="miter"/>
<rect x="1962" y="302.5" width="46" height="7" fill="#bdbdbd"/>
<rect x="1962" y="304.5" width="46" height="3" fill="#e0e0e0"/>
<path d="M1976,281 L1993,287 L1987,290 Q1994,306 1987,322 L1993,325 L1976,331 L1974,315 L1979,319 Q1985,306 1979,293 L1974,297 Z" fill="#eeeeee" stroke="#000" stroke-width="1.5"/>
<path d="M2028,322 Q2030,292 2061,289" stroke="#9ab4e0" stroke-width="3" fill="none"/>
<rect x="2022" y="316" width="13" height="13" fill="#063a7a"/>
<rect x="2025" y="319" width="7" height="7" fill="#eeeeee"/>
<rect x="2055" y="283" width="13" height="13" fill="#063a7a"/>
<rect x="2058" y="286" width="7" height="7" fill="#eeeeee"/>
<polygon points="2057,325 2074,325 2065.5,335" fill="#8a8a8a"/>
</g>
<g><circle cx="2104.8" cy="1140.9" r="12.92" fill="#0a0a0a"/><line x1="2104.8" y1="1140.9" x2="2123.71" y2="1137.57" stroke="#0a0a0a" stroke-width="10.48" stroke-linecap="round"/><line x1="2104.8" y1="1140.9" x2="2120.53" y2="1151.91" stroke="#0a0a0a" stroke-width="10.48" stroke-linecap="round"/><line x1="2104.8" y1="1140.9" x2="2108.13" y2="1159.81" stroke="#0a0a0a" stroke-width="10.48" stroke-linecap="round"/><line x1="2104.8" y1="1140.9" x2="2093.79" y2="1156.63" stroke="#0a0a0a" stroke-width="10.48" stroke-linecap="round"/><line x1="2104.8" y1="1140.9" x2="2085.89" y2="1144.23" stroke="#0a0a0a" stroke-width="10.48" stroke-linecap="round"/><line x1="2104.8" y1="1140.9" x2="2089.07" y2="1129.89" stroke="#0a0a0a" stroke-width="10.48" stroke-linecap="round"/><line x1="2104.8" y1="1140.9" x2="2101.47" y2="1121.99" stroke="#0a0a0a" stroke-width="10.48" stroke-linecap="round"/><line x1="2104.8" y1="1140.9" x2="2115.81" y2="1125.17" stroke="#0a0a0a" stroke-width="10.48" stroke-linecap="round"/><circle cx="2104" cy="1140" r="11.52" fill="#d8d8d8"/><line x1="2104" y1="1140" x2="2122.91" y2="1136.67" stroke="#d8d8d8" stroke-width="7.68" stroke-linecap="round"/><line x1="2104" y1="1140" x2="2119.73" y2="1151.01" stroke="#d8d8d8" stroke-width="7.68" stroke-linecap="round"/><line x1="2104" y1="1140" x2="2107.33" y2="1158.91" stroke="#d8d8d8" stroke-width="7.68" stroke-linecap="round"/><line x1="2104" y1="1140" x2="2092.99" y2="1155.73" stroke="#d8d8d8" stroke-width="7.68" stroke-linecap="round"/><line x1="2104" y1="1140" x2="2085.09" y2="1143.33" stroke="#d8d8d8" stroke-width="7.68" stroke-linecap="round"/><line x1="2104" y1="1140" x2="2088.27" y2="1128.99" stroke="#d8d8d8" stroke-width="7.68" stroke-linecap="round"/><line x1="2104" y1="1140" x2="2100.67" y2="1121.09" stroke="#d8d8d8" stroke-width="7.68" stroke-linecap="round"/><line x1="2104" y1="1140" x2="2115.01" y2="1124.27" stroke="#d8d8d8" stroke-width="7.68" stroke-linecap="round"/><circle cx="2104" cy="1140" r="6.48" fill="#0a0a0a"/><circle cx="2104" cy="1140" r="4.80" fill="#2e2e2e"/></g>
<polygon points="2117,1160 2134,1160 2125.5,1170" fill="#8a8a8a"/>
<defs><linearGradient id="bt1181" x1="0" y1="0" x2="0" y2="1"><stop offset="0" stop-color="#4c4c4c"/><stop offset="1" stop-color="#333"/></linearGradient></defs>
<rect x="401" y="1181" width="99.5" height="50" fill="url(#bt1181)" stroke="#151515" stroke-width="1"/>
<line x1="402" y1="1182" x2="402" y2="1230" stroke="#555" stroke-width="1"/>
<line x1="451.5" y1="1182" x2="451.5" y2="1230" stroke="#505050" stroke-width="1"/>
<line x1="450.5" y1="1181" x2="450.5" y2="1231" stroke="#0a0a0a" stroke-width="1.3"/>
<g stroke="#10201c" stroke-width="7.4" stroke-linecap="round"><line x1="419.4" y1="1198.3" x2="433.4" y2="1212.3"/><line x1="433.4" y1="1198.3" x2="419.4" y2="1212.3"/></g>
<g stroke="#dedede" stroke-width="5.2" stroke-linecap="round"><line x1="419.4" y1="1198.3" x2="433.4" y2="1212.3"/><line x1="433.4" y1="1198.3" x2="419.4" y2="1212.3"/></g>
<path d="M468.59999999999997,1184.5 H481.8 V1197.8000000000002 H495.09999999999997 V1211.0 H481.8 V1224.3000000000002 H468.59999999999997 V1211.0 H455.3 V1197.8000000000002 H468.59999999999997 Z" fill="#1a1830"/>
<path d="M471.09999999999997,1186.9 H479.3 V1200.3000000000002 H492.7 V1208.5 H479.3 V1221.9 H471.09999999999997 V1208.5 H457.7 V1200.3000000000002 H471.09999999999997 Z" fill="#dcdcdc"/>
<polygon points="419.5,1247.9 445.0,1265.4 419.5,1283.4" fill="#1c1c1c"/>
<polygon points="415.8,1244.0 441.0,1261.7 415.8,1279.7" fill="#000"/>
<polygon points="418.9,1250.2 435.1,1261.7 418.9,1273.6" fill="#ececec"/>
<defs><linearGradient id="cbar" x1="0" y1="0" x2="1" y2="0">
<stop offset="0" stop-color="#000000"/>
<stop offset="0.008" stop-color="#0e0200"/>
<stop offset="0.02" stop-color="#1a0c00"/>
<stop offset="0.044" stop-color="#2a1600"/>
<stop offset="0.091" stop-color="#3c2400"/>
<stop offset="0.138" stop-color="#4e3200"/>
<stop offset="0.185" stop-color="#623e00"/>
<stop offset="0.233" stop-color="#744800"/>
<stop offset="0.28" stop-color="#845000"/>
<stop offset="0.327" stop-color="#925800"/>
<stop offset="0.344" stop-color="#9a5e00"/>
<stop offset="0.398" stop-color="#aa6a14"/>
<stop offset="0.469" stop-color="#bc7626"/>
<stop offset="0.60" stop-color="#d68a36"/>
<stop offset="0.76" stop-color="#f29e42"/>
<stop offset="0.88" stop-color="#ffa546"/>
<stop offset="0.94" stop-color="#ffcd5a"/>
<stop offset="1" stop-color="#fff270"/>
</linearGradient></defs>
<rect x="526" y="1180" width="1581.2" height="78.2" fill="url(#cbar)"/>
<rect x="526" y="1180" width="1581" height="1.2" fill="url(#topb2)"/>
<defs><linearGradient id="topb2" gradientUnits="userSpaceOnUse" x1="526" y1="0" x2="2108" y2="0"><stop offset="0" stop-color="#e2e2e2"/><stop offset="0.5" stop-color="#a2a2a2"/><stop offset="1" stop-color="#505050"/></linearGradient></defs>
<line x1="526.5" y1="1181" x2="526.5" y2="1250" stroke="#e8e8e8" stroke-width="1.2"/>
<path d="M526,1249.5 L544,1267 V1287.5 H508 V1267 Z" fill="url(#keyg)" stroke="#0e0e0e" stroke-width="1.5"/>
<rect x="511" y="1269" width="30" height="16" fill="#000000"/>
<path d="M993,1249.5 L1011,1267 V1287.5 H975 V1267 Z" fill="url(#keyg)" stroke="#0e0e0e" stroke-width="1.5"/>
<rect x="978" y="1269" width="30" height="16" fill="#8c5000"/>
<path d="M1945.2,1249.5 L1963.2,1267 V1287.5 H1927.2 V1267 Z" fill="url(#keyg)" stroke="#0e0e0e" stroke-width="1.5"/>
<rect x="1930.2" y="1269" width="30" height="16" fill="#ffa545"/>
<path d="M2106.5,1249.5 L2124.5,1267 V1287.5 H2088.5 V1267 Z" fill="url(#keyg)" stroke="#0e0e0e" stroke-width="1.5"/>
<rect x="2091.5" y="1269" width="30" height="16" fill="#fff066"/>
<rect x="371" y="1321" width="1769" height="60" fill="#2e2e2e" />
<polygon points="386.3,1339 400.1,1351.6 386.3,1364.2" fill="#d8d8d8"/>
<text x="419" y="1361" font-family="Liberation Sans" font-size="29" fill="#d0d0d0" font-weight="normal" text-anchor="start" textLength="99" lengthAdjust="spacingAndGlyphs" >Masking</text>
</svg>
</body></html>
